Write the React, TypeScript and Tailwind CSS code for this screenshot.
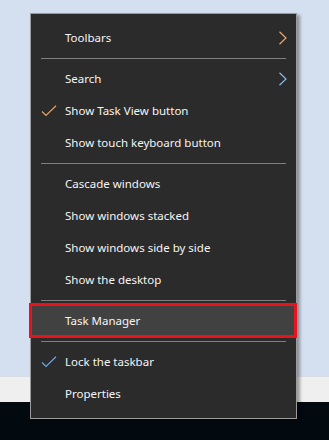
import React from "react";

const Check = ({ color }: { color: string }) => (
  <svg width="16" height="12" viewBox="0 0 16 12">
    <path d="M1 6.5 L5 10.5 L15 0.8" fill="none" stroke={color} strokeWidth="1.2" />
  </svg>
);

const Chevron = ({ color }: { color: string }) => (
  <svg width="10" height="14" viewBox="0 0 10 14">
    <path d="M1.5 0.8 L8 7 L1.5 13.2" fill="none" stroke={color} strokeWidth="1.2" />
  </svg>
);

type Item = {
  label: string;
  check?: string;
  chevron?: string;
  highlight?: boolean;
};

const Row = ({ item }: { item: Item }) => (
  <div
    className={`relative h-[32px] flex items-center text-[11.5px] text-[#f5f5f5] ${
      item.highlight ? "bg-[#414141]" : ""
    }`}
  >
    <div className="w-[34px] pl-[10px] flex items-center">
      {item.check && <Check color={item.check} />}
    </div>
    <span className="flex-1 leading-none">{item.label}</span>
    <div className="w-[18px] flex items-center">
      {item.chevron && <Chevron color={item.chevron} />}
    </div>
    {item.highlight && (
      <div className="absolute -left-[2px] -top-[2px] w-[268px] h-[35px] border-[3px] border-[#e8141d] pointer-events-none" />
    )}
  </div>
);

const Sep = () => (
  <div className="py-[4px] px-[10px]">
    <div className="h-px bg-[#7f7f7f]" />
  </div>
);

export default function App() {
  const groups: Item[][] = [
    [{ label: "Toolbars", chevron: "#e9a866" }],
    [
      { label: "Search", chevron: "#8ab8e8" },
      { label: "Show Task View button", check: "#e8a060" },
      { label: "Show touch keyboard button" },
    ],
    [
      { label: "Cascade windows" },
      { label: "Show windows stacked" },
      { label: "Show windows side by side" },
      { label: "Show the desktop" },
    ],
    [{ label: "Task Manager", highlight: true }],
    [{ label: "Lock the taskbar", check: "#6aa8e8" }, { label: "Properties" }],
  ];

  return (
    <div
      className="relative w-[329px] h-[440px] overflow-hidden flex flex-col"
      style={{ fontFamily: '"Noto Sans", "Open Sans", sans-serif' }}
    >
      <div className="h-[376px] bg-[#d4dfef]" />
      <div className="h-[26px] bg-[#efefef] border-t border-[#d9dde3]" />
      <div className="flex-1 bg-[#030a0f]" />

      <div className="absolute left-[30px] top-[13px] w-[267px] h-[406px] bg-[#2b2b2b] border border-[#9b9b9b] shadow-[3px_2px_3px_rgba(0,0,0,0.35)] py-[8px] flex flex-col">
        {groups.map((g, gi) => (
          <React.Fragment key={gi}>
            {gi > 0 && <Sep />}
            {g.map((it) => (
              <Row key={it.label} item={it} />
            ))}
          </React.Fragment>
        ))}
      </div>
    </div>
  );
}
